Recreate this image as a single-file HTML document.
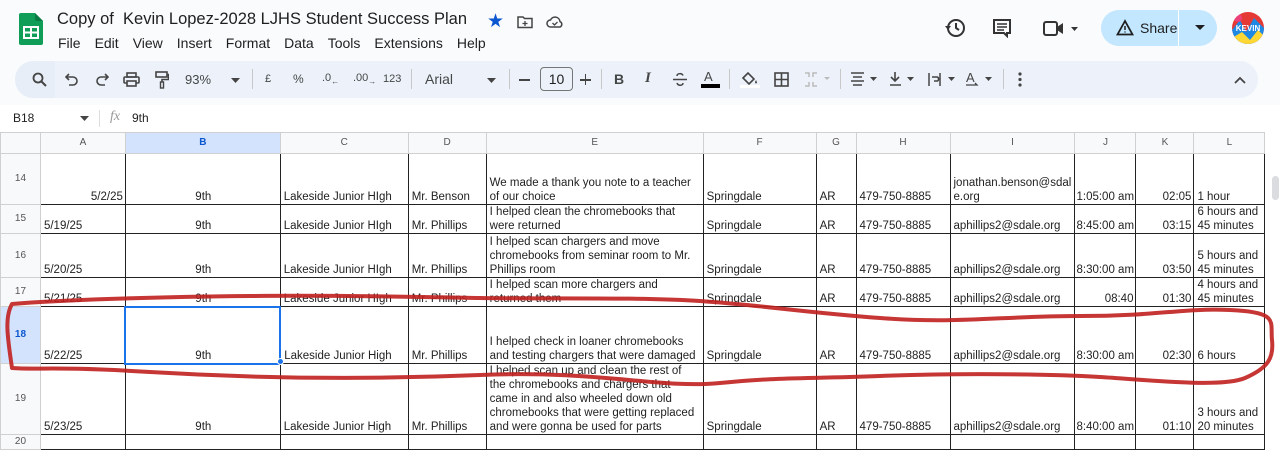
<!DOCTYPE html>
<html><head><meta charset="utf-8"><style>
*{box-sizing:border-box;margin:0;padding:0}
body{width:1280px;height:450px;overflow:hidden;background:#fff;font-family:"Liberation Sans",Arial,sans-serif;position:relative;color:#1f1f1f}
.top{position:absolute;left:0;top:0;width:1280px;height:105px;background:#f9fbfd}
.abs{position:absolute}
.title{left:57px;top:10px;font-size:16.5px;color:#1f1f1f;white-space:nowrap}
.menu{left:58px;top:35px;font-size:14px;color:#1f1f1f;white-space:nowrap}
.menu span{margin-right:14px}
.pill{left:15px;top:61px;width:1243px;height:37px;background:#edf2fa;border-radius:19px}
.tb{top:72px;font-size:13px;color:#444746}
.fx{top:111px;font-size:12px}
table{position:absolute;left:0;top:132px;border-collapse:collapse;table-layout:fixed;font-size:11.5px;font-family:"Liberation Sans",Arial,sans-serif}
td{border:1px solid #222;vertical-align:bottom;padding:0 2px 0 3px;line-height:14px;overflow:hidden;white-space:nowrap;color:#222}
td div{overflow:hidden}
td.w{white-space:normal}
td.rh{background:#f8f9fa;color:#555;font-size:10px;text-align:center;vertical-align:middle;border:1px solid #d0d0d0;padding:0}
tr.hd td{background:#f8f9fa;color:#555;font-size:10px;text-align:center;vertical-align:middle;border:1px solid #d0d0d0;height:21px;padding:0}
.c{text-align:center}.r{text-align:right}
</style></head><body>
<div class="top"></div>
<svg class="abs" style="left:19px;top:13px" width="24" height="32" viewBox="0 0 24 32"><path d="M2 0h14l8 8v22a2 2 0 0 1-2 2H2a2 2 0 0 1-2-2V2a2 2 0 0 1 2-2z" fill="#0f9d58"/><path d="M16 0l8 8h-6a2 2 0 0 1-2-2z" fill="#0a7a43"/><rect x="5" y="14" width="14" height="11" fill="none" stroke="#fff" stroke-width="2"/><path d="M5 19.5h14M12 14v11" stroke="#fff" stroke-width="2"/></svg>
<div class="abs title">Copy of&nbsp; Kevin Lopez-2028 LJHS Student Success Plan</div>
<div class="abs" style="left:487px;top:10px;color:#0b57d0;font-size:19px">★</div>
<svg class="abs" style="left:517px;top:15px" width="16" height="14"><path d="M1 2h5l1.5 1.5H15v9H1z" fill="none" stroke="#444" stroke-width="1.5"/><path d="M8 6v5M5.5 8.5h5" stroke="#444" stroke-width="1.3"/></svg>
<svg class="abs" style="left:546px;top:15px" width="18" height="13"><path d="M4.5 12a3.5 3.5 0 0 1 0-7 5 5 0 0 1 9.5 1.5 3 3 0 0 1 0 5.5z" fill="none" stroke="#444" stroke-width="1.5"/><path d="M6.5 8l2 2 3-3" stroke="#444" fill="none" stroke-width="1.3"/></svg>
<div class="abs menu"><span>File</span><span>Edit</span><span>View</span><span>Insert</span><span>Format</span><span>Data</span><span>Tools</span><span>Extensions</span><span>Help</span></div>
<svg class="abs" style="left:945px;top:18px" width="22" height="20"><circle cx="11" cy="10" r="8" fill="none" stroke="#333" stroke-width="2"/><path d="M11 5v5l3 2" stroke="#333" stroke-width="2" fill="none"/><path d="M0 8l3 4 3-4z" fill="#333"/></svg>
<svg class="abs" style="left:992px;top:18px" width="20" height="20"><path d="M2 2h16v13h-3v3l-3-3H2z" fill="none" stroke="#333" stroke-width="2"/><path d="M5 6h10M5 9h10M5 12h7" stroke="#333" stroke-width="1.5"/></svg>
<svg class="abs" style="left:1043px;top:19px" width="40" height="20"><rect x="1" y="3" width="13" height="13" rx="2" fill="none" stroke="#333" stroke-width="2"/><path d="M14 8l6-4v11l-6-4z" fill="#333"/><path d="M28 8h7l-3.5 4z" fill="#333"/></svg>
<div class="abs" style="left:1101px;top:10px;width:116px;height:36px;background:#c2e7ff;border-radius:18px"></div>
<div class="abs" style="left:1178px;top:10px;width:1px;height:36px;background:#fff"></div>
<svg class="abs" style="left:1116px;top:19px" width="18" height="17"><path d="M9 2L1.5 15.5h15z" fill="none" stroke="#1f1f1f" stroke-width="1.8"/><path d="M9 7v4M9 12.5v1" stroke="#1f1f1f" stroke-width="1.5"/></svg>
<div class="abs" style="left:1140px;top:20px;font-size:14px;color:#1f1f1f">Share</div>
<svg class="abs" style="left:1195px;top:25px" width="10" height="6"><path d="M0 0h10L5 5z" fill="#1f1f1f"/></svg>
<svg class="abs" style="left:1232px;top:12px" width="32" height="32"><defs><clipPath id="cp"><circle cx="16" cy="16" r="16"/></clipPath></defs><g clip-path="url(#cp)"><rect width="32" height="32" fill="#e53935"/><path d="M0 18L8 8 14 20 22 6 32 16V32H0z" fill="#1e88e5"/><path d="M0 26L10 20 18 28 26 18 32 24V32H0z" fill="#fdd835"/><circle cx="6" cy="6" r="4" fill="#ec407a"/></g><text x="16" y="19" font-size="8" font-weight="bold" fill="#fff" text-anchor="middle" font-family="Liberation Sans">KEVIN</text></svg>

<div class="abs pill"></div>
<div class="abs" style="left:15px;top:61px;width:40px;height:37px;background:#e8eef7;border-radius:19px 0 0 19px"></div>
<svg class="abs" style="left:32px;top:72px" width="15" height="15"><circle cx="6" cy="6" r="4.5" fill="none" stroke="#444" stroke-width="1.8"/><path d="M9.5 9.5L14 14" stroke="#444" stroke-width="2"/></svg>
<svg class="abs" style="left:65px;top:73px" width="14" height="13"><path d="M4 1L1 4l3 3" fill="none" stroke="#444" stroke-width="1.6"/><path d="M1 4h7a4 4 0 0 1 0 8H4" fill="none" stroke="#444" stroke-width="1.6"/></svg>
<svg class="abs" style="left:95px;top:73px" width="14" height="13"><path d="M10 1l3 3-3 3" fill="none" stroke="#444" stroke-width="1.6"/><path d="M13 4H6a4 4 0 0 0 0 8h4" fill="none" stroke="#444" stroke-width="1.6"/></svg>
<svg class="abs" style="left:123px;top:72px" width="17" height="15"><rect x="4" y="1" width="9" height="4" fill="none" stroke="#444" stroke-width="1.6"/><rect x="1" y="5" width="15" height="6" rx="1" fill="none" stroke="#444" stroke-width="1.6"/><rect x="4" y="9" width="9" height="5" fill="#edf2fa" stroke="#444" stroke-width="1.6"/></svg>
<svg class="abs" style="left:155px;top:71px" width="14" height="18"><rect x="1" y="1" width="11" height="5" fill="none" stroke="#444" stroke-width="1.6"/><path d="M12 3.5h1.5v5H7v3" fill="none" stroke="#444" stroke-width="1.6"/><rect x="5.5" y="11" width="3" height="6" fill="none" stroke="#444" stroke-width="1.4"/></svg>
<div class="abs tb" style="left:185px">93%</div>
<svg class="abs" style="left:231px;top:78px" width="9" height="5"><path d="M0 0h9L4.5 5z" fill="#444"/></svg>
<div class="abs" style="left:252px;top:69px;width:1px;height:20px;background:#c7c7c7"></div>
<div class="abs tb" style="left:265px;font-size:11px;top:73px">£</div>
<div class="abs tb" style="left:293px;font-size:12px">%</div>
<div class="abs tb" style="left:322px;font-size:11px">.0<sub style="font-size:8px">←</sub></div>
<div class="abs tb" style="left:353px;font-size:11px">.00<sub style="font-size:8px">→</sub></div>
<div class="abs tb" style="left:383px;font-size:11px;top:73px">123</div>
<div class="abs" style="left:411px;top:69px;width:1px;height:20px;background:#c7c7c7"></div>
<div class="abs tb" style="left:425px;font-size:14px;top:71px">Arial</div>
<svg class="abs" style="left:487px;top:78px" width="9" height="5"><path d="M0 0h9L4.5 5z" fill="#444"/></svg>
<div class="abs" style="left:509px;top:69px;width:1px;height:20px;background:#c7c7c7"></div>
<div class="abs" style="left:519px;top:79px;width:11px;height:1.6px;background:#444"></div>
<div class="abs" style="left:540px;top:67px;width:33px;height:24px;border:1px solid #747775;border-radius:4px;font-size:14px;text-align:center;line-height:22px;color:#1f1f1f">10</div>
<div class="abs" style="left:580px;top:79px;width:11px;height:1.6px;background:#444"></div>
<div class="abs" style="left:584.7px;top:74px;width:1.6px;height:11px;background:#444"></div>
<div class="abs" style="left:601px;top:69px;width:1px;height:20px;background:#c7c7c7"></div>
<div class="abs tb" style="left:614px;font-weight:bold;font-size:14px;top:71px">B</div>
<div class="abs tb" style="left:645px;font-style:italic;font-size:15px;top:70px;font-family:'Liberation Serif',serif;font-weight:bold">I</div>
<svg class="abs" style="left:672px;top:72px" width="16" height="15"><path d="M11 3.5C10 1 5 1 5 4M5 11c1 3 6 3 6 0" fill="none" stroke="#444" stroke-width="1.5"/><path d="M1 7.5h14" stroke="#444" stroke-width="1.5"/></svg>
<div class="abs tb" style="left:704px;font-size:13px;top:69px">A</div>
<div class="abs" style="left:701px;top:84px;width:19px;height:4px;background:#000"></div>
<div class="abs" style="left:729px;top:69px;width:1px;height:20px;background:#c7c7c7"></div>
<svg class="abs" style="left:740px;top:70px" width="20" height="18"><path d="M3 8l5-5 6 6-5 5z" fill="none" stroke="#444" stroke-width="1.6"/><path d="M16 10c1 2 1.5 3 0 3.5-1.5-.5-1-1.5 0-3.5z" fill="#444"/><rect x="0" y="15" width="20" height="3" fill="#fff"/></svg>
<svg class="abs" style="left:774px;top:72px" width="15" height="15"><rect x="1" y="1" width="13" height="13" fill="none" stroke="#444" stroke-width="1.6"/><path d="M7.5 1v13M1 7.5h13" stroke="#444" stroke-width="1.6"/></svg>
<svg class="abs" style="left:804px;top:72px" width="26" height="15"><path d="M1 1h4v4M1 14h4v-4M13 1H9v4M13 14H9v-4" fill="none" stroke="#bbb" stroke-width="1.5"/><path d="M20 5h6l-3 3z" fill="#bbb"/></svg>
<div class="abs" style="left:840px;top:69px;width:1px;height:20px;background:#c7c7c7"></div>
<svg class="abs" style="left:850px;top:72px" width="30" height="15"><path d="M1 1h13M3 5h9M1 9h13M3 13h9" stroke="#444" stroke-width="1.6"/><path d="M20 5h7l-3.5 4z" fill="#444"/></svg>
<svg class="abs" style="left:889px;top:71px" width="30" height="16"><path d="M6 1v9M2 6l4 4 4-4M1 14h11" fill="none" stroke="#444" stroke-width="1.6"/><path d="M18 6h7l-3.5 4z" fill="#444"/></svg>
<svg class="abs" style="left:928px;top:72px" width="30" height="15"><path d="M1 1v13M12 1v13M4 5h5c2 0 2 4 0 4H6" fill="none" stroke="#444" stroke-width="1.5"/><path d="M20 5h7l-3.5 4z" fill="#444"/></svg>
<svg class="abs" style="left:966px;top:70px" width="30" height="17"><text x="0" y="12" font-size="13" fill="#444" font-family="Liberation Sans">A</text><path d="M0 15h11l-2-2" stroke="#444" fill="none" stroke-width="1.3"/><path d="M19 7h7l-3.5 4z" fill="#444"/></svg>
<div class="abs" style="left:1003px;top:69px;width:1px;height:20px;background:#c7c7c7"></div>
<svg class="abs" style="left:1018px;top:72px" width="4" height="15"><circle cx="2" cy="2" r="1.6" fill="#444"/><circle cx="2" cy="7.5" r="1.6" fill="#444"/><circle cx="2" cy="13" r="1.6" fill="#444"/></svg>
<svg class="abs" style="left:1234px;top:76px" width="12" height="8"><path d="M1 7l5-5 5 5" fill="none" stroke="#444" stroke-width="1.8"/></svg>

<div class="abs fx" style="left:13px">B18</div>
<svg class="abs" style="left:80px;top:116px" width="9" height="5"><path d="M0 0h9L4.5 5z" fill="#444"/></svg>
<div class="abs" style="left:99px;top:110px;width:1px;height:17px;background:#ddd"></div>
<div class="abs fx" style="left:110px;color:#999;font-style:italic;font-family:'Liberation Serif',serif;font-size:14px;top:109px">fx</div>
<div class="abs fx" style="left:132px">9th</div>

<table>
<colgroup><col style="width:40px"><col style="width:85px"><col style="width:155px"><col style="width:128px"><col style="width:78px"><col style="width:217px"><col style="width:113px"><col style="width:40px"><col style="width:94px"><col style="width:125px"><col style="width:61px"><col style="width:58px"><col style="width:71px"><col style="width:15px"></colgroup>
<tr class="hd"><td></td><td>A</td><td style="background:#d3e3fd;color:#0b57d0;font-weight:bold">B</td><td>C</td><td>D</td><td>E</td><td>F</td><td>G</td><td>H</td><td>I</td><td>J</td><td>K</td><td>L</td><td style="background:#fff;border:none"></td></tr>
<tr style="height:51px"><td class="rh">14</td><td class="r">5/2/25</td><td class="c">9th</td><td>Lakeside Junior HIgh</td><td>Mr. Benson</td><td class="w">We made a thank you note to a teacher of our choice</td><td>Springdale</td><td>AR</td><td>479-750-8885</td><td class="w" style="word-break:break-all">jonathan.benson@sdale.org</td><td style="padding:0 0 0 1px">1:05:00 am</td><td class="r">02:05</td><td>1 hour</td><td style="border:none;border-left:1px solid #ddd"></td></tr>
<tr style="height:29px"><td class="rh">15</td><td>5/19/25</td><td class="c">9th</td><td>Lakeside Junior HIgh</td><td>Mr. Phillips</td><td class="w">I helped clean the chromebooks that were returned</td><td>Springdale</td><td>AR</td><td>479-750-8885</td><td>aphillips2@sdale.org</td><td style="padding:0 0 0 1px">8:45:00 am</td><td class="r">03:15</td><td class="w">6 hours and 45 minutes</td><td style="border:none;border-left:1px solid #ddd"></td></tr>
<tr style="height:44px"><td class="rh">16</td><td>5/20/25</td><td class="c">9th</td><td>Lakeside Junior HIgh</td><td>Mr. Phillips</td><td class="w">I helped scan chargers and move chromebooks from seminar room to Mr. Phillips room</td><td>Springdale</td><td>AR</td><td>479-750-8885</td><td>aphillips2@sdale.org</td><td style="padding:0 0 0 1px">8:30:00 am</td><td class="r">03:50</td><td class="w">5 hours and 45 minutes</td><td style="border:none;border-left:1px solid #ddd"></td></tr>
<tr style="height:28px"><td class="rh">17</td><td>5/21/25</td><td class="c">9th</td><td>Lakeside Junior HIgh</td><td>Mr. Phillips</td><td class="w">I helped scan more chargers and returned them</td><td>Springdale</td><td>AR</td><td>479-750-8885</td><td>aphillips2@sdale.org</td><td class="r">08:40</td><td class="r">01:30</td><td class="w">4 hours and 45 minutes</td><td style="border:none;border-left:1px solid #ddd"></td></tr>
<tr style="height:57px"><td class="rh" style="background:#d3e3fd;color:#0b57d0;font-weight:bold">18</td><td>5/22/25</td><td class="c" style="border:2px solid #1a73e8">9th</td><td>Lakeside Junior High</td><td>Mr. Phillips</td><td style="white-space:nowrap">I helped check in loaner chromebooks<br>and testing chargers that were damaged</td><td>Springdale</td><td>AR</td><td>479-750-8885</td><td>aphillips2@sdale.org</td><td style="padding:0 0 0 1px">8:30:00 am</td><td class="r">02:30</td><td>6 hours</td><td style="border:none;border-left:1px solid #ddd"></td></tr>
<tr style="height:71px"><td class="rh">19</td><td>5/23/25</td><td class="c">9th</td><td>Lakeside Junior High</td><td>Mr. Phillips</td><td style="white-space:nowrap">I helped scan up and clean the rest of<br>the chromebooks and chargers that<br>came in and also wheeled down old<br>chromebooks that were getting replaced<br>and were gonna be used for parts</td><td>Springdale</td><td>AR</td><td>479-750-8885</td><td>aphillips2@sdale.org</td><td style="padding:0 0 0 1px">8:40:00 am</td><td class="r">01:10</td><td class="w">3 hours and 20 minutes</td><td style="border:none;border-left:1px solid #ddd"></td></tr>
<tr style="height:15px"><td class="rh">20</td><td></td><td></td><td></td><td></td><td></td><td></td><td></td><td></td><td></td><td></td><td></td><td></td><td style="border:none;border-left:1px solid #ddd"></td></tr>
</table>
<div class="abs" style="left:1272px;top:176px;width:7px;height:24px;background:#dadce0;border-radius:4px"></div>
<div class="abs" style="left:277px;top:358px;width:7px;height:7px;background:#1a73e8;border-radius:50%;border:1px solid #fff"></div>
<svg class="abs" style="left:0;top:0" width="1280" height="450"><path d="M12 304 C60 300 150 297 250 296 S420 297 480 298 S640 297 700 301 S800 312 880 318 S1000 316 1080 316 S1180 308 1230 310 S1270 322 1272 340 S1268 368 1245 378 S1150 380 1100 377 S960 373 880 376 S780 377 720 383 S600 370 480 375 S250 378 150 372 S40 370 12 368 C8 340 4 318 12 304 Z" fill="none" stroke="#c0201f" stroke-width="4" stroke-linejoin="round" opacity="0.9"/></svg>
</body></html>
